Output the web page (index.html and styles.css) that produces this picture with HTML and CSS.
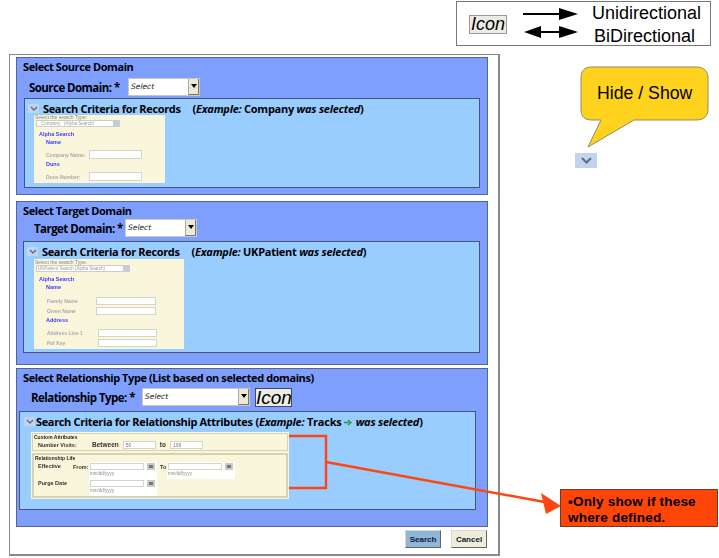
FILE: index.html
```html
<!DOCTYPE html>
<html lang="en">
<head>
    <meta charset="UTF-8">
    <meta name="viewport" content="width=device-width, initial-scale=1.0">
    <title>Search Relationships</title>
    <link rel="stylesheet" href="styles.css">
</head>
<body>
<div class="page">
    <div class="frame">
        <section class="domain domain-source">
            <h3>Select Source Domain</h3>
            <div class="field field-source">
                <label>Source Domain: *</label>
                <div class="select select-source"><i>Select</i><span class="drop"></span></div>
            </div>
            <div class="criteria criteria-source">
                <div class="criteria-head">
                    <span class="toggle"><svg width="8" height="5" viewBox="0 0 8 5"><path d="M1 1l3 3 3-3" fill="none" stroke="#5a6c94" stroke-width="1.4"/></svg></span>
                    <b>Search Criteria for Records</b>
                    <span class="example">(<em>Example:</em> Company <em>was selected</em>)</span>
                </div>
                <div class="thumb thumb-source">
                    <div class="t-type">Select the search Type:</div>
                    <div class="t-select t-select-source"><span>Company &nbsp;&nbsp;(Alpha Search)</span><span class="t-drop"></span></div>
                    <div class="t-head">Alpha Search</div>
                    <div class="t-sub">Name</div>
                    <div class="t-row t-row-source"><span>Company Name:</span><span class="t-input"></span></div>
                    <div class="t-sub">Duns</div>
                    <div class="t-row t-row-source"><span>Duns Number:</span><span class="t-input"></span></div>
                </div>
            </div>
        </section>

        <section class="domain domain-target">
            <h3>Select Target Domain</h3>
            <div class="field field-target">
                <label>Target Domain: *</label>
                <div class="select select-target"><i>Select</i><span class="drop"></span></div>
            </div>
            <div class="criteria criteria-target">
                <div class="criteria-head">
                    <span class="toggle"><svg width="8" height="5" viewBox="0 0 8 5"><path d="M1 1l3 3 3-3" fill="none" stroke="#5a6c94" stroke-width="1.4"/></svg></span>
                    <b>Search Criteria for Records</b>
                    <span class="example">(<em>Example:</em> UKPatient <em>was selected</em>)</span>
                </div>
                <div class="thumb thumb-target">
                    <div class="t-type">Select the search Type:</div>
                    <div class="t-select t-select-target"><span>UKPatient Search (Alpha Search)</span><span class="t-drop"></span></div>
                    <div class="t-head">Alpha Search</div>
                    <div class="t-sub">Name</div>
                    <div class="t-row t-row-target"><span>Family Name</span><span class="t-input"></span></div>
                    <div class="t-row t-row-target"><span>Given Name</span><span class="t-input"></span></div>
                    <div class="t-sub">Address</div>
                    <div class="t-row t-row-target t-row-gap"><span>Address Line 1</span><span class="t-input"></span></div>
                    <div class="t-row t-row-target t-row-gap"><span>Paf Key</span><span class="t-input"></span></div>
                </div>
            </div>
        </section>

        <section class="domain domain-rel">
            <h3>Select Relationship Type (List based on selected domains)</h3>
            <div class="field field-rel">
                <label>Relationship Type: *</label>
                <div class="select select-rel"><i>Select</i><span class="drop"></span></div>
                <span class="icon-box">Icon</span>
            </div>
            <div class="criteria criteria-rel">
                <div class="criteria-head">
                    <span class="toggle"><svg width="8" height="5" viewBox="0 0 8 5"><path d="M1 1l3 3 3-3" fill="none" stroke="#5a6c94" stroke-width="1.4"/></svg></span>
                    <b>Search Criteria for Relationship Attributes</b>
                    <span class="example">(<em>Example:</em> Tracks <svg class="mini-arrow" width="9" height="7" viewBox="0 0 9 7"><path d="M0 3.5h5M4 1l3 2.5L4 6" fill="none" stroke="#1b9a3c" stroke-width="1.3"/></svg> <em>was selected</em>)</span>
                </div>
                <div class="thumb thumb-rel">
                    <div class="box box-custom">
                        <div class="box-title">Custom Attributes</div>
                        <div class="visits">
                            <span class="visits-label">Number Visits:</span>
                            <b>Between</b><span class="t-input t-val t-val-min">50</span>
                            <b>to</b><span class="t-input t-val t-val-max">199</span>
                        </div>
                    </div>
                    <div class="box box-life">
                        <div class="box-title">Relationship Life</div>
                        <div class="life-row">
                            <span class="life-label">Effective</span>
                            <span class="life-from">From:</span>
                            <span class="date">
                                <span class="date-line"><span class="t-input t-date"></span><span class="cal"></span></span>
                                <small>mm/dd/yyyy</small>
                            </span>
                            <span class="life-to">To:</span>
                            <span class="date">
                                <span class="date-line"><span class="t-input t-date"></span><span class="cal"></span></span>
                                <small>mm/dd/yyyy</small>
                            </span>
                        </div>
                        <div class="life-row life-row-purge">
                            <span class="life-label">Purge Date</span>
                            <span class="date">
                                <span class="date-line"><span class="t-input t-date"></span><span class="cal"></span></span>
                                <small>mm/dd/yyyy</small>
                            </span>
                        </div>
                    </div>
                </div>
            </div>
        </section>

        <div class="actions">
            <button class="btn btn-search">Search</button>
            <button class="btn btn-cancel">Cancel</button>
        </div>
    </div>

    <!-- annotations on top of the mockup -->
    <div class="legend">
        <span class="legend-icon">Icon</span>
        <svg class="legend-arrows" width="56" height="38" viewBox="0 0 56 38">
            <path d="M0 10h38" stroke="#000" stroke-width="2"/>
            <path d="M36 4l19 6-19 6z"/>
            <path d="M14 28h26" stroke="#000" stroke-width="2"/>
            <path d="M1 28l17-6v12z"/>
            <path d="M36 22l19 6-19 6z"/>
        </svg>
        <div class="legend-text">
            <span>Unidirectional</span>
            <span class="legend-bi">BiDirectional</span>
        </div>
    </div>

    <svg class="callout-shape" width="130" height="84" viewBox="0 0 130 84">
        <path d="M12 1H116C124 1 128 5 128 12V43C128 50 124 54 116 54H54L8 81 21 54H12C4 54 1 50 1 43V12C1 5 4 1 12 1Z" fill="#ffd21e" stroke="#8f8a70"/>
    </svg>
    <div class="callout-text">Hide / Show</div>
    <span class="toggle toggle-demo"><svg width="11" height="7" viewBox="0 0 11 7"><path d="M1 1l4.500 4.500L10 1" fill="none" stroke="#5a6c94" stroke-width="2"/></svg></span>

    <svg class="connector" width="300" height="90" viewBox="0 0 300 90">
        <path d="M1 2H38V54H1" fill="none" stroke="#ff4511" stroke-width="2.4"/>
        <path d="M38 28L262 69" stroke="#ff4511" stroke-width="2.4"/>
        <path d="M273 72L253 59 258 80z" fill="#ff4511"/>
    </svg>
    <div class="note">&bull;Only show if these where defined.</div>
</div>
</body>
</html>
```

FILE: styles.css
```css
* {
    box-sizing: border-box;
}
body {
    margin: 0;
    background: #fff;
    font-family: "Liberation Sans", Arial, sans-serif;
    color: #000;
}
.page {
    position: relative;
    width: 719px;
    height: 558px;
    overflow: hidden;
}
.frame {
    width: 491px;
    height: 502px;
    margin: 0 0 0 9px;
    position: relative;
    top: 54px;
    padding: 2px 10px 0 6px;
    border: 1px solid #8a8a8a;
    border-right-width: 2px;
    border-bottom-width: 2px;
}
.domain {
    background: #7f9fff;
    border: 1px solid #56648e;
    padding: 2px 7px 0 6px;
    margin-bottom: 6px;
}
.domain h3 {
    margin: 0;
    font-size: 11px;
    line-height: 13px;
    font-family: "Open Sans", sans-serif;
    font-weight: 700;
    letter-spacing: -0.42px;
}
.domain-source { height: 138px; }
.domain-target { height: 164px; }
.domain-rel { height: 159px; margin-bottom: 0; margin-top: -3px; }

.field {
    display: flex;
    align-items: center;
    height: 18px;
}
.field label {
    flex: none;
    font-size: 11.500px;
    font-weight: 700;
    font-family: "Open Sans", sans-serif;
    letter-spacing: -0.55px;
}
.field-source { margin-top: 5px; padding-left: 6px; }
.field-source label { width: 99px; }
.field-target { margin-top: 2px; padding-left: 11px; }
.field-target label { width: 91px; }
.field-rel { margin-top: 4px; padding-left: 8px; }
.field-rel label { width: 111px; }

.select {
    height: 18px;
    background: #fff;
    border: 1px solid #c9c9b8;
    display: flex;
    justify-content: space-between;
    font-size: 7.500px;
    line-height: 16px;
    padding-left: 2px;
    font-family: "DejaVu Sans", sans-serif;
    color: #222;
}
.select-source { width: 72px; }
.select-target { width: 72px; }
.select-rel { width: 108px; }
.drop {
    width: 11px;
    background: #ece9d8;
    border-left: 1px solid #aaa;
    border-right: 1px solid #777;
    border-bottom: 1px solid #777;
    position: relative;
}
.drop::after {
    content: "";
    position: absolute;
    left: 2px;
    top: 5px;
    border: 3px solid transparent;
    border-top: 4px solid #000;
    border-bottom: 0;
}
.icon-box {
    width: 37px;
    height: 19px;
    margin-left: 5px;
    background: #ecebe4;
    border: 1px solid #3f4a63;
    font-size: 19px;
    line-height: 17px;
    font-style: italic;
    text-align: center;
    overflow: hidden;
}

.criteria {
    background: #99ccff;
    border: 1px solid #44557a;
}
.criteria-source { height: 90px; margin: 2px 0 0 1px; padding: 3px 0 0 3px; }
.criteria-target { height: 112px; margin-top: 4px; padding: 3px 0 0 3px; }
.criteria-rel { height: 99px; margin: 5px 4px 0 -4px; padding: 3px 0 0 4px; }

.criteria-head {
    display: flex;
    align-items: center;
    height: 12px;
    font-family: "Open Sans", sans-serif;
    font-size: 11px;
    letter-spacing: -0.35px;
}
.criteria-head b {
    margin-left: 4px;
}
.example {
    margin-left: 12px;
    font-size: 11px;
    font-weight: 700;
    letter-spacing: -0.25px;
    white-space: pre;
}
.criteria-rel .criteria-head b { margin-left: 1px; }
.criteria-rel .example { margin-left: 3px; }
.mini-arrow { vertical-align: 0; }
.toggle {
    display: inline-flex;
    align-items: center;
    justify-content: center;
    width: 11px;
    height: 9px;
    background: #c3d3ee;
}

.thumb {
    background: #faf6dc;
    font-family: "Liberation Sans", sans-serif;
    color: #999;
    filter: blur(0.25px);
}
.thumb-source { width: 131px; height: 68px; margin: 1px 0 0 6px; padding: 0 0 0 1px; }
.thumb-target { width: 150px; height: 90px; margin: 2px 0 0 7px; padding: 1px 0 0 1px; }
.t-type { font-size: 5px; line-height: 5px; color: #888; }
.t-select {
    height: 7px;
    margin: 0 0 0 1px;
    background: #fff;
    border: 1px solid #ccc;
    display: flex;
    justify-content: space-between;
    font-size: 4.500px;
    line-height: 5px;
    padding-left: 4px;
}
.t-select-source { width: 84px; }
.t-select-target { width: 94px; padding-left: 1px; }
.t-drop { width: 6px; background: #c3cad8; }
.t-head {
    margin: 4px 0 0 4px;
    font-size: 5.500px;
    line-height: 7px;
    font-weight: 700;
    color: #3b3bff;
}
.t-sub {
    margin: 1px 0 0 11px;
    font-size: 5.500px;
    line-height: 6px;
    font-weight: 700;
    color: #3b3bff;
}
.t-row {
    display: flex;
    align-items: center;
    justify-content: space-between;
    font-size: 5px;
    font-weight: 700;
    color: #aaa;
}
.t-row-source { width: 96px; height: 9px; margin: 5px 0 2px 11px; }
.t-row-source .t-input { width: 53px; height: 9px; }
.t-row-target { width: 109px; height: 8px; margin: 2px 0 0 12px; }
.t-row-target .t-input { width: 60px; height: 8px; }
.thumb-target .t-sub + .t-row { margin-top: 7px; }
.thumb-target .t-sub + .t-row-gap { margin-top: 6px; }
.thumb-target .t-row + .t-sub { margin-top: 2px; }
.t-row-target.t-row-gap { width: 110px; }
.t-row-target.t-row-gap .t-input { width: 59px; }
.t-input {
    display: inline-block;
    background: #fff;
    border: 1px solid #d4d4c8;
}

.thumb-rel {
    width: 258px;
    height: 67px;
    margin: 5px 0 0 7px;
    padding: 1px 1px 0;
    color: #333;
}
.box {
    border: 1px solid #d6d2b4;
    font-size: 5px;
}
.box-title {
    font-size: 5px;
    line-height: 6px;
    font-weight: 700;
    color: #222;
    padding-left: 1px;
}
.box-custom { height: 18px; }
.box-life { height: 45px; margin-top: 2px; border-width: 2px; }
.visits {
    display: flex;
    align-items: center;
    height: 9px;
    font-size: 5.500px;
    font-weight: 700;
}
.visits b { font-size: 6.500px; }
.visits-label { width: 54px; margin: 0 0 0 5px; }
.visits .t-val {
    height: 8px;
    margin: 0 4px;
    font-size: 5px;
    line-height: 6px;
    font-weight: 400;
    padding-left: 2px;
    color: #777;
}
.t-val-min { width: 33px; }
.t-val-max { width: 33px; }
.life-row {
    display: flex;
    align-items: flex-start;
    height: 17px;
    margin-top: 1px;
    font-size: 5.500px;
    font-weight: 700;
}
.life-row-purge { margin-top: 0; }
.life-label { width: 35px; margin: 1px 0 0 4px; }
.life-from { width: 16px; padding-top: 2px; }
.life-to { width: 7px; margin-left: 3px; padding-top: 2px; }
.life-row-purge .life-label { width: 51px; }
.date {
    display: flex;
    flex-direction: column;
    background: #fff;
    padding: 1px 2px 0 1px;
    height: 17px;
}
.date-line { display: flex; align-items: center; gap: 3px; }
.t-date { width: 54px; height: 7px; }
.cal { width: 8px; height: 7px; border: 2px solid #c9c9c9; background-color: #777; }
.date small { font-size: 4.500px; line-height: 7px; font-weight: 400; color: #888; }

.actions {
    display: flex;
    justify-content: flex-end;
    gap: 10px;
    margin-top: 3px;
    margin-right: 1px;
}
.btn {
    width: 36px;
    height: 18px;
    padding: 0;
    border: 1px solid #d8d8d8;
    border-right-color: #666;
    border-bottom-color: #666;
    font-family: "Liberation Sans", sans-serif;
    font-size: 8px;
    font-weight: 700;
    color: #0a1a33;
}
.btn-search { background: #8fb6d6; }
.btn-cancel { background: #f0ecd8; }

.legend {
    position: absolute;
    left: 456px;
    top: 1px;
    width: 255px;
    height: 45px;
    border: 1px solid #777;
    background: #fff;
}
.legend-icon {
    position: absolute;
    left: 12px;
    top: 13px;
    width: 38px;
    height: 19px;
    background: #ecebe4;
    border: 1px solid #999;
    font-size: 18px;
    line-height: 17px;
    font-style: italic;
    text-align: center;
}
.legend-arrows {
    position: absolute;
    left: 66px;
    top: 2px;
}
.legend-text {
    position: absolute;
    left: 135px;
    top: 0;
    display: flex;
    flex-direction: column;
    align-items: center;
    font-size: 18px;
    line-height: 23px;
}
.legend-bi {
    margin-right: 4px;
}

.callout-shape {
    position: absolute;
    left: 580px;
    top: 66px;
}
.callout-text {
    position: absolute;
    left: 597px;
    top: 82px;
    font-size: 17.700px;
    line-height: 22px;
}
.toggle-demo {
    position: absolute;
    left: 575px;
    top: 153px;
    width: 22px;
    height: 15px;
}
.connector {
    position: absolute;
    left: 288px;
    top: 434px;
}
.note {
    position: absolute;
    left: 560px;
    top: 489px;
    width: 158px;
    height: 38px;
    padding: 4px 4px 0 7px;
    background: #ff4508;
    border: 1px solid #6b3a28;
    font-size: 13.500px;
    line-height: 16px;
    font-weight: 700;
    letter-spacing: 0.2px;
}
```
